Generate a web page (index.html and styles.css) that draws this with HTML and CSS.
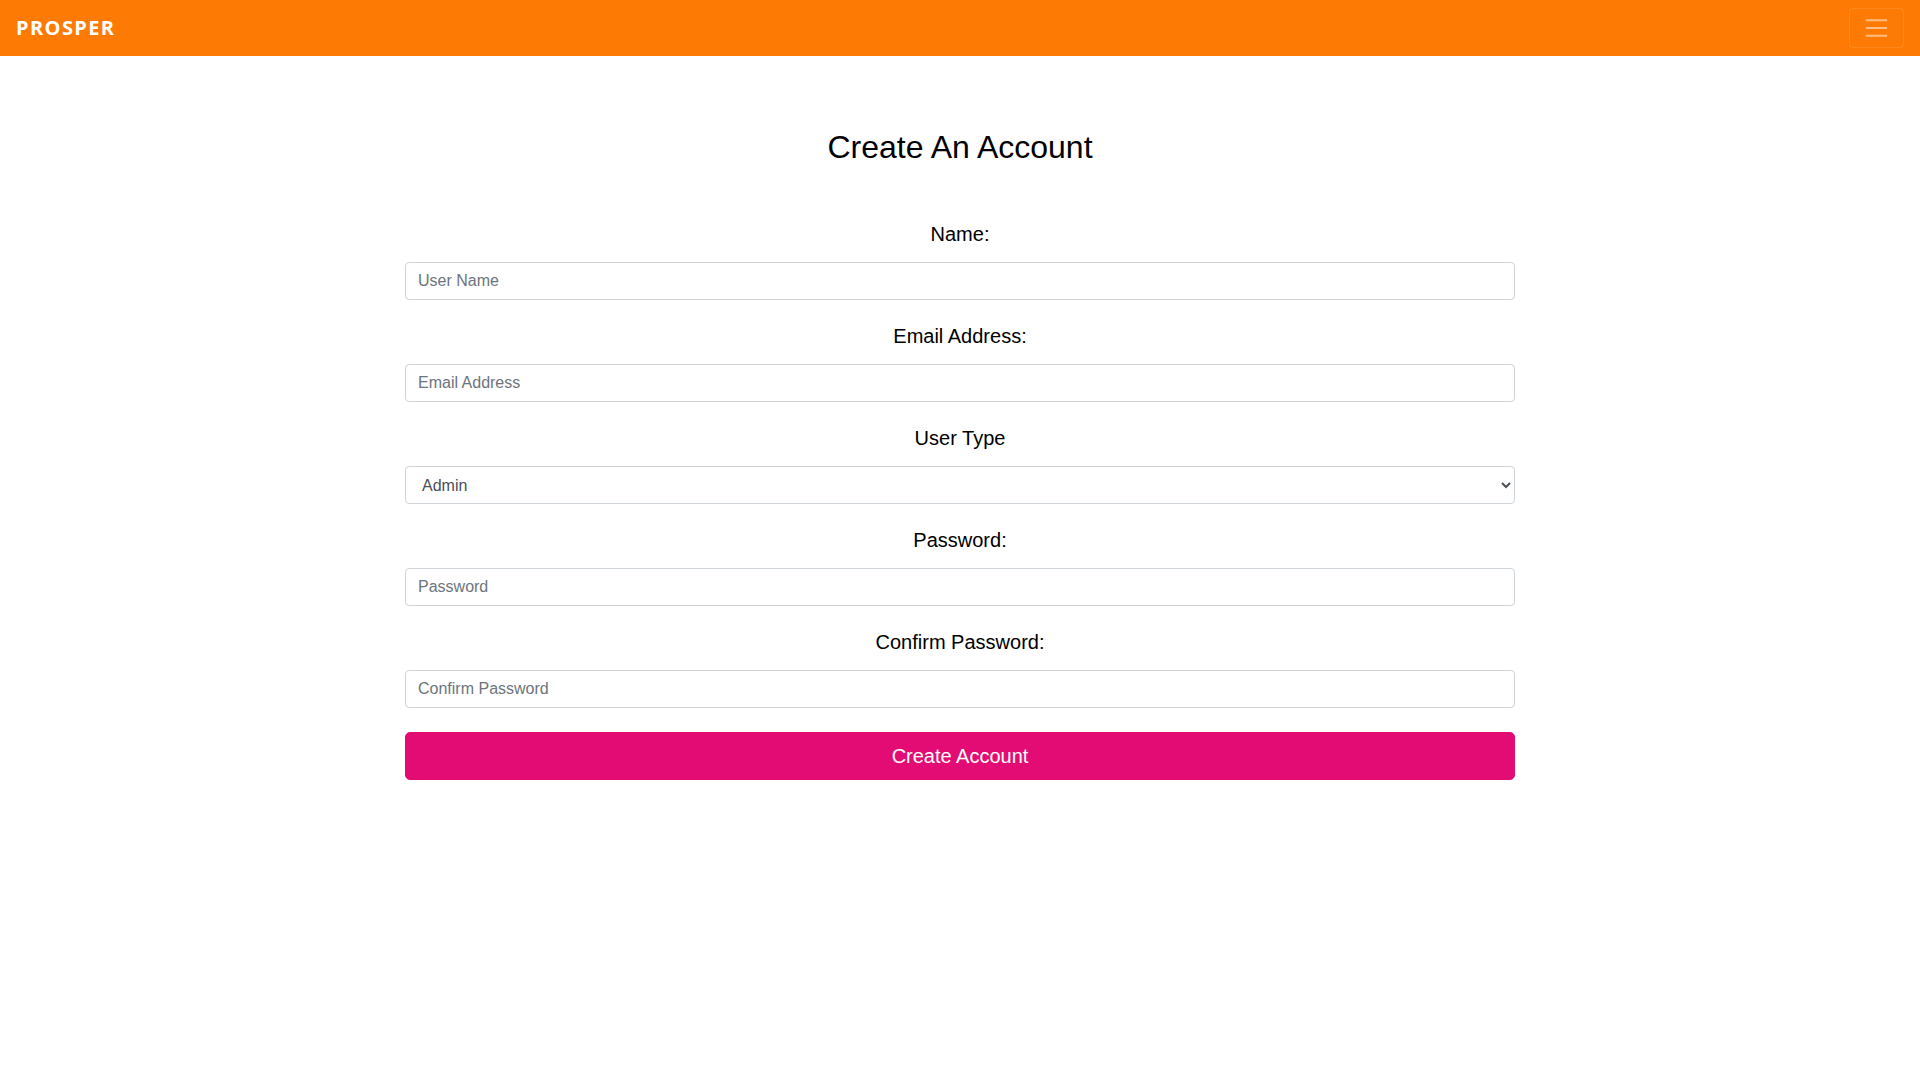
FILE: index.html
```html
<!DOCTYPE html>
<html lang="en">
<head>
<meta charset="utf-8">
<title>Prosper - Create An Account</title>
<link rel="stylesheet" href="styles.css">
</head>
<body>
<nav class="navbar">
  <a class="brand" href="#">PROSPER</a>
  <button class="toggler" type="button" aria-label="Toggle navigation">
    <svg width="30" height="30" viewBox="0 0 30 30"><path d="M4 7h22M4 15h22M4 23h22" stroke="rgba(255,255,255,0.5)" stroke-width="2" stroke-linecap="butt" fill="none"/></svg>
  </button>
</nav>
<main class="container">
  <h1 class="title">Create An Account</h1>
  <form class="form">
    <div class="group">
      <label class="label" for="name">Name:</label>
      <input class="control" id="name" type="text" placeholder="User Name">
    </div>
    <div class="group">
      <label class="label" for="email">Email Address:</label>
      <input class="control" id="email" type="email" placeholder="Email Address">
    </div>
    <div class="group">
      <label class="label" for="type">User Type</label>
      <select class="control select" id="type">
        <option>Admin</option>
        <option>User</option>
      </select>
    </div>
    <div class="group">
      <label class="label" for="pw">Password:</label>
      <input class="control" id="pw" type="password" placeholder="Password">
    </div>
    <div class="group">
      <label class="label" for="pw2">Confirm Password:</label>
      <input class="control" id="pw2" type="password" placeholder="Confirm Password">
    </div>
    <button class="submit" type="button">Create Account</button>
  </form>
</main>
</body>
</html>
```
FILE: styles.css
```css
* { box-sizing: border-box; }
html, body { margin: 0; padding: 0; }
body {
  font-family: "Liberation Sans", Arial, sans-serif;
  font-size: 16px;
  line-height: 1.5;
  color: #000;
  background: #fff;
}
.navbar {
  display: flex;
  align-items: center;
  justify-content: space-between;
  background: #fd7b05;
  padding: 8px 16px;
  height: 56px;
}
.brand {
  font-family: "Open Sans", "Liberation Sans", sans-serif;
  font-weight: 700;
  font-size: 20px;
  line-height: 30px;
  color: #fff;
  text-decoration: none;
  letter-spacing: 1.4px;
}
.toggler {
  display: flex;
  align-items: center;
  justify-content: center;
  width: 55px;
  height: 40px;
  padding: 4px 12px;
  background: transparent;
  border: 1px solid rgba(255,255,255,0.1);
  border-radius: 4px;
}
.toggler svg { display: block; }
.container {
  width: 1140px;
  margin: 0 auto;
  padding: 0 15px;
}
.title {
  margin: 72px 0 0;
  font-size: 32px;
  font-weight: 400;
  line-height: 1.2;
  text-align: center;
}
.form {
  margin-top: 53px;
  display: flex;
  flex-direction: column;
}
.group {
  display: flex;
  flex-direction: column;
  margin-bottom: 21px;
}
.group:last-of-type { margin-bottom: 24px; }
.label {
  font-size: 20px;
  line-height: 30px;
  text-align: center;
  margin-bottom: 13px;
}
.control {
  display: block;
  width: 100%;
  height: 38px;
  padding: 6px 12px;
  font-family: "Liberation Sans", Arial, sans-serif;
  font-size: 16px;
  line-height: 1.5;
  color: #495057;
  background: #fff;
  border: 1px solid #ced4da;
  border-radius: 4px;
}
.control::placeholder { color: #6c757d; opacity: 1; }
.select { padding: 6px 12px; }
.submit {
  display: block;
  width: 100%;
  height: 48px;
  padding: 8px 16px;
  font-family: "Liberation Sans", Arial, sans-serif;
  font-size: 20px;
  line-height: 1.5;
  color: #fff;
  background: #e30c74;
  border: 1px solid #e30c74;
  border-radius: 5px;
}
```
